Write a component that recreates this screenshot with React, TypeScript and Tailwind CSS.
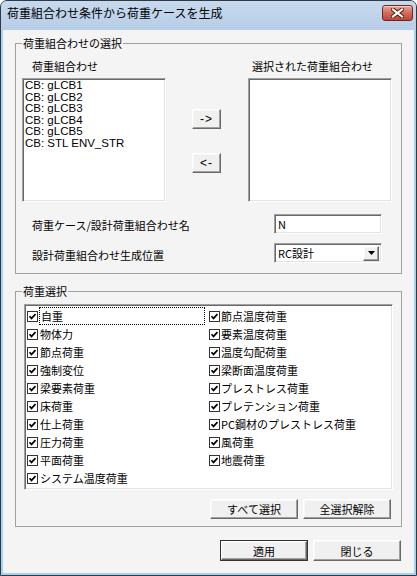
import React from 'react';

const raised =
  'bg-[#f0f0f0] border border-t-white border-l-white border-r-[#696969] border-b-[#696969] shadow-[inset_-1px_-1px_0_#a0a0a0,inset_1px_1px_0_#f8f8f8]';
const sunken =
  'bg-white border border-t-[#a0a0a0] border-l-[#a0a0a0] border-r-white border-b-white shadow-[inset_1px_1px_0_#696969,inset_-1px_-1px_0_#e3e3e3]';

const combos = ['CB: gLCB1', 'CB: gLCB2', 'CB: gLCB3', 'CB: gLCB4', 'CB: gLCB5', 'CB: STL ENV_STR'];

const leftLoads = [
  '自重',
  '物体力',
  '節点荷重',
  '強制変位',
  '梁要素荷重',
  '床荷重',
  '仕上荷重',
  '圧力荷重',
  '平面荷重',
  'システム温度荷重',
];
const rightLoads = [
  '節点温度荷重',
  '要素温度荷重',
  '温度勾配荷重',
  '梁断面温度荷重',
  'プレストレス荷重',
  'プレテンション荷重',
  'PC鋼材のプレストレス荷重',
  '風荷重',
  '地震荷重',
];

function CloseButton() {
  return (
    <div className="mt-[4px] w-[31px] h-[16px] rounded-[3px] border border-[#6b2820] bg-gradient-to-b from-[#eaa596] via-[#d26a5b] to-[#c0443a] flex items-center justify-center shadow-[inset_0_1px_0_#f6cfc6]">
      <svg width="13" height="10" viewBox="0 0 13 10">
        <path d="M2 1.5 L11 8.5 M11 1.5 L2 8.5" stroke="#4a1810" strokeWidth="4" strokeLinecap="square" />
        <path d="M2 1.5 L11 8.5 M11 1.5 L2 8.5" stroke="#ffffff" strokeWidth="2.2" strokeLinecap="square" />
      </svg>
    </div>
  );
}

function Check() {
  return (
    <svg width="11" height="11" viewBox="0 0 11 11" className="shrink-0">
      <rect x="0.5" y="0.5" width="10" height="10" fill="#fff" stroke="#333" />
      <polyline points="2.5,5.2 4.5,7.4 8.5,3.2" fill="none" stroke="#000" strokeWidth="1.7" />
    </svg>
  );
}

function GroupBox({ title, className, children }: { title: string; className?: string; children: React.ReactNode }) {
  return (
    <fieldset className={`border border-[#a0a0a0] ${className ?? ''}`}>
      <legend className="ml-[6px] px-[1px] h-[12px] leading-[12px]">{title}</legend>
      {children}
    </fieldset>
  );
}

function Button({ label, className }: { label: string; className?: string }) {
  return (
    <div className={`${raised} flex items-center justify-center leading-[12px] ${className ?? ''}`}>{label}</div>
  );
}

export default function App() {
  return (
    <div className="w-[417px] h-[576px] flex flex-col bg-[#a9d2ee] border border-[#2f3a44] rounded-t-[7px] overflow-hidden text-[11px] text-black font-['Noto_Sans_CJK_JP','Noto_Sans',sans-serif]">
      {/* title bar */}
      <div className="h-[29px] shrink-0 flex items-start justify-between pl-[6px] pr-[3px] bg-gradient-to-b from-[#c6d9ee] to-[#b8cee7]">
        <span className="pt-[4px] text-[12px] leading-[16px]">荷重組合わせ条件から荷重ケースを生成</span>
        <CloseButton />
      </div>

      {/* client */}
      <div className="flex-1 mx-[2px] mb-[2px] bg-[#f4f4f4] flex flex-col">
        <GroupBox title="荷重組合わせの選択" className="mt-[7px] ml-[12px] w-[387px] pb-[10px]">
          <div className="flex pl-[6px] mt-[11px]">
            <div className="w-[144px] flex flex-col">
              <div className="pl-[10px] h-[12px] leading-[12px]">荷重組合わせ</div>
              <div className={`${sunken} mt-[6px] h-[124px] pl-[2px] pt-[1px] font-['Liberation_Sans',sans-serif] text-[11.5px]`}>
                {combos.map((c) => (
                  <div key={c} className="h-[11.6px] leading-[11.6px] whitespace-nowrap">
                    {c}
                  </div>
                ))}
              </div>
            </div>
            <div className="w-[82px] flex flex-col pl-[26px]">
              <Button label="->" className="mt-[49px] w-[29px] h-[20px] text-[12px] tracking-[1px] font-['Liberation_Sans',sans-serif]" />
              <Button label="<-" className="mt-[24px] w-[29px] h-[20px] text-[12px] tracking-[1px] font-['Liberation_Sans',sans-serif]" />
            </div>
            <div className="w-[144px] flex flex-col">
              <div className="pl-[4px] h-[12px] leading-[12px]">選択された荷重組合わせ</div>
              <div className={`${sunken} mt-[6px] h-[124px]`} />
            </div>
          </div>

          <div className="flex items-center pl-[16px] mt-[12px]">
            <div className="w-[242px] leading-[12px] pt-[1px]">荷重ケース/設計荷重組合わせ名</div>
            <div className={`${sunken} w-[108px] h-[20px] pl-[3px] flex items-center leading-[12px]`}>N</div>
          </div>

          <div className="flex items-center pl-[16px] mt-[9px]">
            <div className="w-[242px] leading-[12px] pt-[4px]">設計荷重組合わせ生成位置</div>
            <div className={`${sunken} w-[108px] h-[20px] pl-[3px] pr-[2px] flex items-center justify-between leading-[12px]`}>
              <span>RC設計</span>
              <div className={`${raised} w-[16px] h-[15px] flex items-center justify-center`}>
                <svg width="7" height="4" viewBox="0 0 7 4">
                  <path d="M0 0 H7 L3.5 4 Z" fill="#000" />
                </svg>
              </div>
            </div>
          </div>
        </GroupBox>

        <GroupBox title="荷重選択" className="mt-[11px] ml-[12px] w-[387px] pb-[7px]">
          <div className={`${sunken} mt-[7px] ml-[8px] w-[369px] h-[186px] p-[2px] flex`}>
            <div className="w-[182px] flex flex-col">
              {leftLoads.map((l, i) => (
                <div key={l} className="h-[18px] flex items-center">
                  <Check />
                  {i === 0 ? (
                    <span className="ml-[1px] mr-[4px] flex-1 h-[18px] border border-dotted border-black pl-[1px] leading-[16px]">
                      {l}
                    </span>
                  ) : (
                    <span className="ml-[2px] leading-[12px]">{l}</span>
                  )}
                </div>
              ))}
            </div>
            <div className="flex flex-col">
              {rightLoads.map((l) => (
                <div key={l} className="h-[18px] flex items-center">
                  <Check />
                  <span className="ml-[1px] leading-[12px] whitespace-nowrap">{l}</span>
                </div>
              ))}
            </div>
          </div>
          <div className="flex justify-end gap-[5px] pr-[10px] mt-[9px]">
            <Button label="すべて選択" className="w-[88px] h-[20px]" />
            <Button label="全選択解除" className="w-[88px] h-[20px]" />
          </div>
        </GroupBox>

        <div className="flex justify-end gap-[5px] pr-[13px] mt-[13px]">
          <div className="w-[88px] h-[21px] border border-[#333] flex">
            <Button label="適用" className="flex-1" />
          </div>
          <Button label="閉じる" className="w-[88px] h-[21px]" />
        </div>
      </div>
    </div>
  );
}
